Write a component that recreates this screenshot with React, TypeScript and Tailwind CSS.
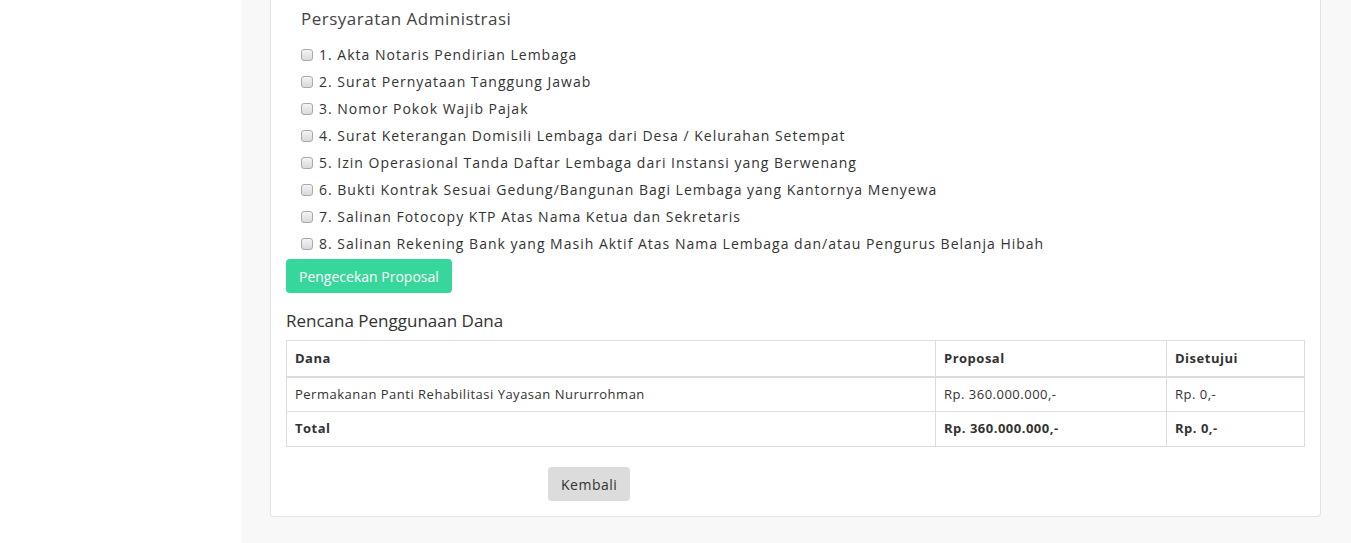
const items = [
  "1. Akta Notaris Pendirian Lembaga",
  "2. Surat Pernyataan Tanggung Jawab",
  "3. Nomor Pokok Wajib Pajak",
  "4. Surat Keterangan Domisili Lembaga dari Desa / Kelurahan Setempat",
  "5. Izin Operasional Tanda Daftar Lembaga dari Instansi yang Berwenang",
  "6. Bukti Kontrak Sesuai Gedung/Bangunan Bagi Lembaga yang Kantornya Menyewa",
  "7. Salinan Fotocopy KTP Atas Nama Ketua dan Sekretaris",
  "8. Salinan Rekening Bank yang Masih Aktif Atas Nama Lembaga dan/atau Pengurus Belanja Hibah",
];

function Checkbox() {
  return (
    <span className="w-[12px] h-[12px] shrink-0 rounded-[3px] border border-[#a9a9a9] bg-gradient-to-b from-[#f4f4f4] to-[#d9d9d9]" />
  );
}

export default function App() {
  return (
    <div className="flex min-h-[543px] h-[543px] overflow-hidden bg-[#f8f8f8] text-[#333] font-['Open_Sans',sans-serif]">
      {/* sidebar */}
      <div className="w-[241px] shrink-0 bg-white" />

      {/* content */}
      <div className="flex-1 pl-[29px] pr-[30px]">
        <div className="bg-white border border-[#e3e3e3] border-t-0 rounded-b-[4px] px-[15px] pb-[15px]">
          <div className="pl-[15px] pt-[7px]">
            <h4 className="text-[17px] leading-[24px] tracking-[0.5px] text-[#444]">Persyaratan Administrasi</h4>
            <ul className="mt-[10px] flex flex-col">
              {items.map((t) => (
                <li key={t} className="flex items-center gap-[6px] h-[27px] text-[14px] tracking-[1px] text-[#333]">
                  <Checkbox />
                  <span>{t}</span>
                </li>
              ))}
            </ul>
          </div>

          <button className="mt-[2px] h-[34px] px-[13px] rounded-[4px] bg-[#37d69a] text-white text-[14px]">
            Pengecekan Proposal
          </button>

          <h4 className="mt-[16px] text-[17px] leading-[24px] text-[#333]">Rencana Penggunaan Dana</h4>

          <table className="mt-[7px] w-full border-collapse text-[13px] tracking-[0.5px] text-[#333]">
            <thead>
              <tr className="h-[36px]">
                <th className="text-left font-bold px-[8px] border border-[#ddd] border-b-2">Dana</th>
                <th className="text-left font-bold px-[8px] border border-[#ddd] border-b-2 w-[231px]">Proposal</th>
                <th className="text-left font-bold px-[8px] border border-[#ddd] border-b-2 w-[138px]">Disetujui</th>
              </tr>
            </thead>
            <tbody>
              <tr className="h-[35px]">
                <td className="px-[8px] border border-[#ddd]">Permakanan Panti Rehabilitasi Yayasan Nururrohman</td>
                <td className="px-[8px] border border-[#ddd]">Rp. 360.000.000,-</td>
                <td className="px-[8px] border border-[#ddd]">Rp. 0,-</td>
              </tr>
              <tr className="h-[35px] font-bold">
                <td className="px-[8px] border border-[#ddd]">Total</td>
                <td className="px-[8px] border border-[#ddd]">Rp. 360.000.000,-</td>
                <td className="px-[8px] border border-[#ddd]">Rp. 0,-</td>
              </tr>
            </tbody>
          </table>

          <div className="mt-[20px] pl-[262px]">
            <button className="h-[34px] px-[13px] rounded-[4px] bg-[#dcdcdc] text-[#333] text-[14px] tracking-[0.5px]">Kembali</button>
          </div>
        </div>
      </div>
    </div>
  );
}
